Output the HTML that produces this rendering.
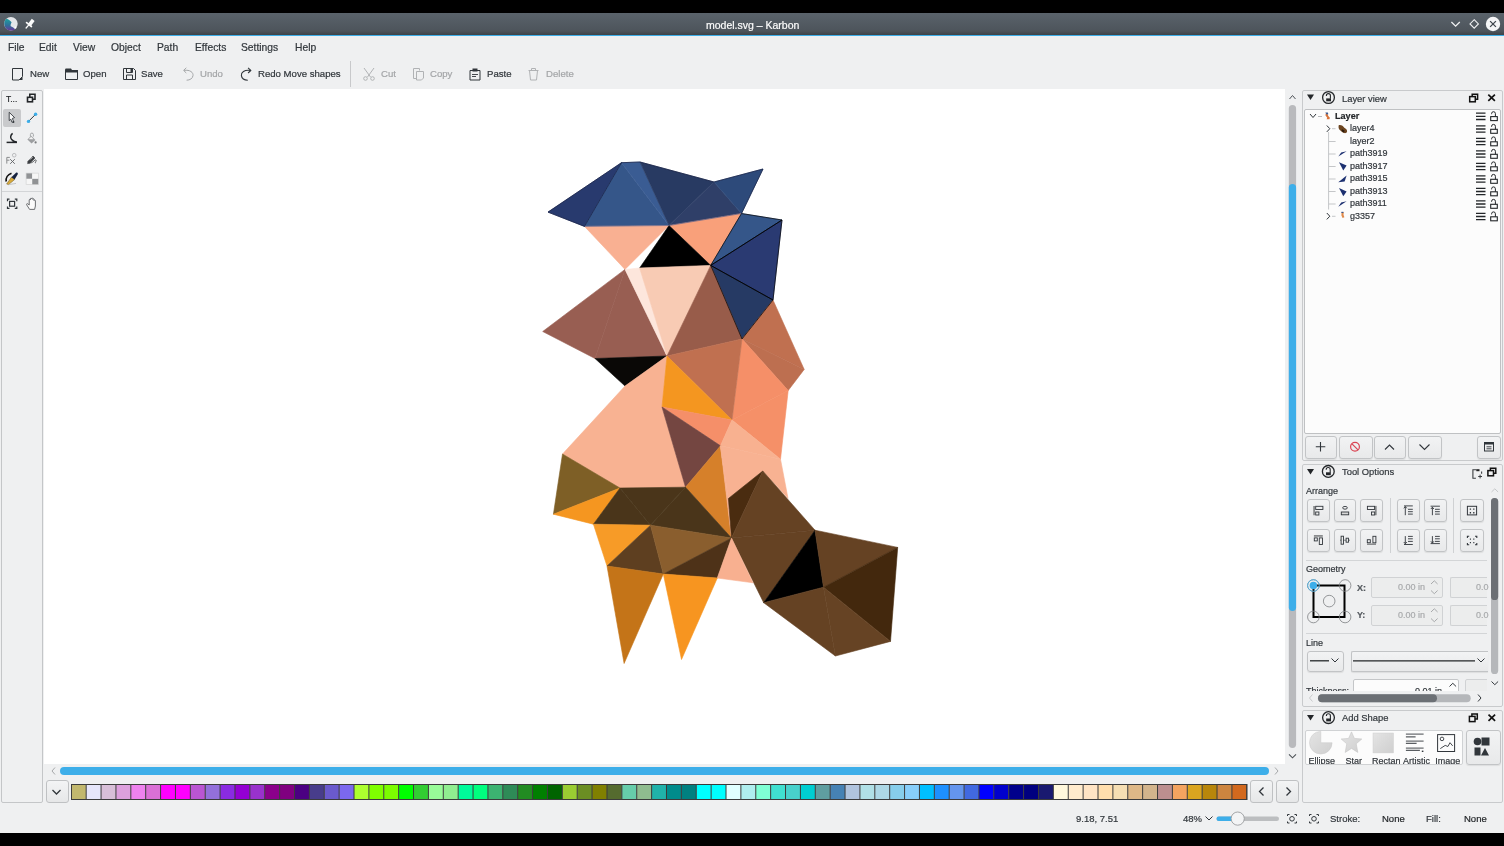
<!DOCTYPE html>
<html><head><meta charset="utf-8">
<style>
*{margin:0;padding:0;box-sizing:border-box}
html,body{width:1504px;height:846px;overflow:hidden;background:#eff0f1;font-family:"Liberation Sans",sans-serif;color:#31363b}
.a{position:absolute}
.t{position:absolute;white-space:nowrap;line-height:1;will-change:transform;-webkit-text-stroke-width:0.2px}
#topbar{left:0;top:0;width:1504px;height:13px;background:#000}
#botbar{left:0;top:833px;width:1504px;height:13px;background:#000}
#title{left:0;top:13px;width:1504px;height:22px;background:linear-gradient(#5a636b,#4d545b 82%,#3e4348)}
#blue{left:0;top:35px;width:1504px;height:1px;background:#3daee9}
.menu{font-size:10.3px;top:43px;color:#31363b}
.tb{font-size:9.6px;top:69px;color:#31363b}
.dis{color:#a3a5a7}
#canvas{left:44px;top:89px;width:1241px;height:675px;background:#fff}
#toolbox{left:1px;top:90px;width:42px;height:713px;border:1px solid #c4c6c8;border-radius:2px;background:#eff0f1}
.dock{position:absolute;left:1302px;width:201px;border:1px solid #c8cacc;border-radius:2px;background:#eff0f1}
.small{font-size:9px}
.btn{position:absolute;border:1px solid #c2c4c6;border-radius:3px;background:linear-gradient(#f2f3f4,#e8e9ea);box-shadow:0 1px 1px rgba(0,0,0,0.08)}
.inp{position:absolute;border:1px solid #d0d2d4;border-radius:2px;background:#eceded}
</style></head><body>
<div class="a" id="topbar"></div>
<div class="a" id="title"></div>
<div class="a" id="blue"></div>
<div class="t" style="left:705.5px;top:20.2px;font-size:10.5px;color:#fcfcfc">model.svg – Karbon</div>

<!-- menu -->
<div class="t menu" style="left:8px">File</div>
<div class="t menu" style="left:39px">Edit</div>
<div class="t menu" style="left:73px">View</div>
<div class="t menu" style="left:111px">Object</div>
<div class="t menu" style="left:157px">Path</div>
<div class="t menu" style="left:195px">Effects</div>
<div class="t menu" style="left:241px">Settings</div>
<div class="t menu" style="left:295px">Help</div>

<!-- toolbar text -->
<div class="t tb" style="left:29.5px">New</div>
<div class="t tb" style="left:83px">Open</div>
<div class="t tb" style="left:141px">Save</div>
<div class="t tb dis" style="left:199.5px">Undo</div>
<div class="t tb" style="left:257.5px">Redo Move shapes</div>
<div class="a" style="left:350px;top:61px;width:1px;height:26px;background:#c8c9cb"></div>
<div class="t tb dis" style="left:380.5px">Cut</div>
<div class="t tb dis" style="left:430px">Copy</div>
<div class="t tb" style="left:486.5px">Paste</div>
<div class="t tb dis" style="left:545.5px">Delete</div>

<div class="a" id="toolbox"></div>
<!-- title bar icons -->
<svg class="a" style="left:0;top:13px" width="40" height="22" viewBox="0 13 40 22">
<defs><linearGradient id="kg" x1="0" y1="0" x2="0" y2="1"><stop offset="0" stop-color="#1fa0a0"/><stop offset="0.55" stop-color="#2f6f9a"/><stop offset="1" stop-color="#6a3a9a"/></linearGradient></defs>
<circle cx="10.9" cy="23.8" r="6.8" fill="#e3e6e9"/>
<path d="M6.5 18.8 C8.5 19.5 10 20.5 11.6 22.2 C10.8 23.8 10.3 25 10.8 26.3 C12.5 27 14 28 15.2 29.2 C13.8 30.3 12.4 30.7 10.9 30.6 A6.8 6.8 0 0 1 6.5 18.8 Z" fill="url(#kg)"/>
<circle cx="15.5" cy="27.6" r="1" fill="#ffffff"/>
<path d="M31.8 18.85 L34.6 20.95 L30.7 26.15 L27.9 24.05 Z" fill="#fbfbfb"/>
<path d="M26.6 22.6 L31.4 26.5" stroke="#fbfbfb" stroke-width="1.7" stroke-linecap="round"/>
<path d="M28.4 25.3 L26.1 28" stroke="#fbfbfb" stroke-width="1.3" stroke-linecap="round"/>
</svg>
<svg class="a" style="left:1440px;top:13px" width="64" height="22" viewBox="1440 13 64 22">
<path d="M1451.4 22 L1455.6 26.2 L1459.8 22" fill="none" stroke="#eff0f1" stroke-width="1.3"/>
<path d="M1474.2 19.7 L1478.4 23.9 L1474.2 28.1 L1470 23.9 Z" fill="none" stroke="#eff0f1" stroke-width="1.1"/>
<circle cx="1493" cy="24" r="7.2" fill="#f4f5f6"/>
<path d="M1490.1 21.1 L1495.9 26.9 M1495.9 21.1 L1490.1 26.9" stroke="#3f464d" stroke-width="1.3"/>
</svg>
<!-- toolbar icons -->
<svg class="a" style="left:0;top:60px" width="560" height="28" viewBox="0 60 560 28">
<g fill="none" stroke="#31363b" stroke-width="1">
<path d="M12.5 68.5 h10 v8 l-3.5 3.5 h-6.5 z"/>
</g>
<path d="M22.5 76.5 v3.5 h-3.5 z" fill="#31363b"/>
<g fill="none" stroke="#31363b" stroke-width="1"><path d="M65.5 69.5 h5 l1 1.5 h6 v8.5 h-12 z"/></g>
<path d="M65.5 68.5 h5.5 l1 1.5 h6 v2.5 h-12.5 z" fill="#31363b"/>
<g fill="none" stroke="#31363b" stroke-width="1"><path d="M123.5 68.5 h10 l2 2 v9 h-12 z M126.5 68.5 v4 h6 v-4 M126.5 79.5 v-4.5 h6 v4.5"/></g>
<path d="M130.5 69 h1.5 v3 h-1.5z" fill="#31363b"/>
<g fill="none" stroke="#a4a6a8" stroke-width="1"><path d="M184 70.4 C190 69.5 193.5 72.5 193 75.6 C192.6 78.5 190 80.2 186.6 80.2"/><path d="M186.3 67.8 L183.6 70.4 L186.3 73"/></g>
<g fill="none" stroke="#31363b" stroke-width="1.1"><path d="M250.4 70.4 C244.4 69.5 240.9 72.5 241.4 75.6 C241.8 78.5 244.4 80.2 247.8 80.2"/><path d="M248.1 67.8 L250.8 70.4 L248.1 73"/></g>
<g fill="none" stroke="#b0b2b4" stroke-width="1"><path d="M364 68 l6.5 9 M374 68 l-6.5 9"/><circle cx="365.5" cy="78.5" r="1.8"/><circle cx="372.5" cy="78.5" r="1.8"/></g>
<g fill="none" stroke="#b0b2b4" stroke-width="1"><path d="M413.5 68.5 h6 v2 M413.5 68.5 v10 h2.5"/><path d="M416.5 71.5 h7 v6.5 l-2 2 h-5 z"/></g>
<g fill="none" stroke="#31363b" stroke-width="1"><path d="M470 70.5 h10 v9.5 h-10 z"/></g>
<path d="M472.5 68.5 h5 v3 h-5z" fill="#31363b"/><path d="M472 74.5 h6 M472 76.5 h4" stroke="#31363b" stroke-width="0.9"/>
<g fill="none" stroke="#b0b2b4" stroke-width="1"><path d="M528.5 70.5 h10 M531.5 70.5 v-2 h4 v2 M529.5 70.5 l1 9.5 h6 l1 -9.5"/></g>
</svg>
<!-- toolbox icons -->
<div class="t" style="left:6px;top:94.5px;font-size:8.5px;color:#232629">T...</div>
<div class="a" style="left:3.2px;top:108.7px;width:17.5px;height:18px;border-radius:2px;background:#c9cacc"></div>
<div class="a" style="left:2px;top:191px;width:40px;height:1px;background:#d3d5d7"></div>
<svg class="a" style="left:0;top:88px" width="44" height="125" viewBox="0 88 44 125">
<g fill="none" stroke="#232629" stroke-width="1.6"><rect x="27.5" y="97.3" width="5" height="4.5"/><path d="M29.8 97.3 v-3 h5.2 v5 h-2.5"/></g>
<path d="M9.2 112.3 L14.6 117.6 L12.4 118.4 L13.6 121.6 L12 122.4 L10.8 119.2 L9.2 120.6 Z" fill="#fafafa" stroke="#31363b" stroke-width="0.9" stroke-linejoin="round"/>
<circle cx="13.5" cy="122" r="0.9" fill="#31363b"/>
<path d="M28.5 121.4 L35.6 114.3" stroke="#31363b" stroke-width="1"/>
<circle cx="28.5" cy="121.4" r="1.7" fill="#3daee9"/><circle cx="35.6" cy="114.3" r="1.7" fill="#3daee9"/>
<path d="M12.6 133.4 C10.5 135 10 137.8 11.6 139.6 C12.8 141 14.5 141.8 16.8 142.3" fill="none" stroke="#232629" stroke-width="1.5"/>
<path d="M6.6 142.4 h10.4" stroke="#232629" stroke-width="1.5"/><path d="M12.5 141.2 L17 141.8 L17 143 L12.5 143 Z" fill="#232629"/>
<path d="M27.4 139.6 L31.2 135.8 L35.4 140 L31.6 143.6 Z" fill="#9c9ea0"/><path d="M28.6 139.2 L31.2 136.8 L33.6 139.2 Z" fill="#f4f4f4"/>
<path d="M30.4 136.6 v-2 a1.5 1.5 0 0 1 3 0 v2" fill="none" stroke="#9c9ea0" stroke-width="0.9"/><circle cx="35.6" cy="142.4" r="1.1" fill="#7a7c7e"/>
<path d="M6.8 157.4 v6.2 M6.8 157.4 h3 M6.8 160.2 h2.6" fill="none" stroke="#8a8c8e" stroke-width="1"/>
<path d="M10.2 159.2 L14.8 163.8 M14.8 159.2 L10.2 163.8" stroke="#5d6063" stroke-width="0.9"/>
<circle cx="14.2" cy="155.2" r="1.8" fill="none" stroke="#b4b6b8" stroke-width="0.9"/>
<path d="M28 161.2 L33 156 L35 158 L30 163.2 L27.6 163.6 Z" fill="#3a3d40" stroke="#3a3d40" stroke-width="0.6" stroke-linejoin="round"/><path d="M30 159.6 L32.6 157" stroke="#f4f4f4" stroke-width="0.8"/>
<path d="M30.2 163 C32.5 162.8 33.8 161 35 160 C36 159.4 36.6 160.4 35.8 161.6 C35.3 162.3 35 162.8 36 163" fill="none" stroke="#3a3d40" stroke-width="0.8"/>
<path d="M6.2 181.5 C5.6 178 7.8 174.5 11.5 173.2" fill="none" stroke="#111" stroke-width="1.7"/>
<path d="M6.6 184 L11.6 177 L14.6 179.6 L8.6 184.6 Z" fill="#d8aa3a" stroke="#6a5520" stroke-width="0.5"/>
<path d="M11.4 177.2 L16 172.8 C17.5 172.2 18.2 173.2 17.6 174.4 L14.6 179.6 Z" fill="#16223e"/>
<path d="M9 184.6 L16 183.4" stroke="#b8babc" stroke-width="0.8"/>
<rect x="26.1" y="173.1" width="6.15" height="5.75" fill="#909294"/><rect x="32.25" y="173.1" width="6.15" height="5.75" fill="#f6f6f6"/>
<rect x="26.1" y="178.85" width="6.15" height="5.75" fill="#f6f6f6"/><rect x="32.25" y="178.85" width="6.15" height="5.75" fill="#909294"/>
<rect x="26.1" y="173.1" width="12.3" height="11.5" fill="none" stroke="#cfcfcf" stroke-width="0.6"/>
<g fill="none" stroke="#31363b" stroke-width="1.2"><path d="M7.5 201.2 v-2 h2 M14.8 199.2 h2 v2 M16.8 206.4 v2 h-2 M9.5 208.4 h-2 v-2"/><rect x="9.6" y="201.4" width="5" height="4.8"/></g>
<path d="M29.6 209.4 L26.8 205 C26.2 204 27 203.2 27.8 203.8 L29.2 205 V200 C29.2 199.2 30.4 199.2 30.4 200 V198.8 C30.4 198 31.6 198 31.6 198.8 V198.6 C31.6 197.8 32.8 197.8 32.8 198.6 V199.4 C32.8 198.6 34 198.6 34 199.4 V200.6 C34 199.8 35.4 199.8 35.4 200.8 V206 L34.6 209.4 Z" fill="#fbfbfb" stroke="#5d6063" stroke-width="0.9" stroke-linejoin="round"/>
</svg>
<div class="a" id="canvas"></div>
<svg class="a" style="left:0;top:0" width="1504" height="846" viewBox="0 0 1504 846"><g stroke-width="0.6" stroke-linejoin="round"><polygon points="548,212.1 621.5,162.7 584.5,226.4" fill="#283a6e" stroke="#283a6e"/><polygon points="621.5,162.7 584.5,226.4 669,225.5" fill="#355689" stroke="#355689"/><polygon points="621.5,162.7 640,162 669,225.5" fill="#3a5c93" stroke="#3a5c93"/><polygon points="640,162 669,225.5 714,182" fill="#283a62" stroke="#283a62"/><polygon points="669,225.5 714,182 741.5,213.5" fill="#2f3f68" stroke="#2f3f68"/><polygon points="714,182 763,169 741.5,213.5" fill="#2d4a7a" stroke="#2d4a7a"/><polygon points="669,225.5 741.5,213.5 710.7,265.4" fill="#f9a07a" stroke="#f9a07a"/><polygon points="584.5,226.4 669,225.5 625,269.4" fill="#f9b092" stroke="#f9b092"/><polygon points="669,225.5 639.6,268 710.7,265.4" fill="#000000" stroke="#000000"/><polygon points="741.5,213.5 782,220 710.7,265.4" fill="#355689" stroke="#355689"/><polygon points="782,220 773,300 710.7,265.4" fill="#2a3a72" stroke="#2a3a72"/><polygon points="710.7,265.4 773,300 742,339" fill="#263a64" stroke="#263a64"/><polygon points="625,269.4 542.7,331.5 595,358.5" fill="#985e52" stroke="#985e52"/><polygon points="625,269.4 595,358.5 667,356" fill="#985e52" stroke="#985e52"/><polygon points="625,269.4 639.6,268 667,356" fill="#fde6dc" stroke="#fde6dc"/><polygon points="639.6,268 710.7,265.4 667,356" fill="#f8cbb4" stroke="#f8cbb4"/><polygon points="710.7,265.4 742,339 667,356" fill="#985c4a" stroke="#985c4a"/><polygon points="773,300 742,339 804.2,369.4" fill="#c07050" stroke="#c07050"/><polygon points="742,339 804.2,369.4 788.2,390.5" fill="#bd6f50" stroke="#bd6f50"/><polygon points="742,339 788.2,390.5 732,420" fill="#f58f68" stroke="#f58f68"/><polygon points="667,356 742,339 732,420" fill="#c07050" stroke="#c07050"/><polygon points="595,358.5 667,356 625,386" fill="#0a0806" stroke="#0a0806"/><polygon points="625,386 667,356 662,407 685.5,487.2 620,488 562.5,454" fill="#f8b292" stroke="#f8b292"/><polygon points="667,356 662,407 732,420" fill="#f49620" stroke="#f49620"/><polygon points="662,407 732,420 720.5,445.8" fill="#f58f69" stroke="#f58f69"/><polygon points="732,420 788.2,390.5 780.5,459.2" fill="#f59068" stroke="#f59068"/><polygon points="732,420 720.5,445.8 780.5,459.2" fill="#f8b190" stroke="#f8b190"/><polygon points="662,407 720.5,445.8 685.5,487.2" fill="#744641" stroke="#744641"/><polygon points="720.5,445.8 685.5,487.2 731.5,538" fill="#d6802a" stroke="#d6802a"/><polygon points="720.5,445.8 780.5,459.2 788,498.3 762.8,471 728.4,498.5" fill="#f8b292" stroke="#f8b292"/><polygon points="720.5,445.8 728.4,498.5 731.5,538" fill="#f8b292" stroke="#f8b292"/><polygon points="562.5,454 553.4,514.2 620,488" fill="#7e5f26" stroke="#7e5f26"/><polygon points="553.4,514.2 620,488 593.4,524.2" fill="#f59620" stroke="#f59620"/><polygon points="620,488 685.5,487.2 650.5,525.2" fill="#4a351a" stroke="#4a351a"/><polygon points="620,488 593.4,524.2 650.5,525.2" fill="#4a351a" stroke="#4a351a"/><polygon points="685.5,487.2 650.5,525.2 731.5,538" fill="#4a351a" stroke="#4a351a"/><polygon points="762.8,471 728.4,498.5 731.5,538" fill="#4a2c10" stroke="#4a2c10"/><polygon points="762.8,471 731.5,538 815,530.2" fill="#654223" stroke="#654223"/><polygon points="731.5,538 815,530.2 763.7,602.7" fill="#654223" stroke="#654223"/><polygon points="593.4,524.2 650.5,525.2 607,566" fill="#f79b27" stroke="#f79b27"/><polygon points="650.5,525.2 607,566 663.3,574" fill="#5e3f20" stroke="#5e3f20"/><polygon points="650.5,525.2 731.5,538 663.3,574" fill="#8a5e2e" stroke="#8a5e2e"/><polygon points="731.5,538 663.3,574 717.3,578" fill="#4e3218" stroke="#4e3218"/><polygon points="731.5,538 717.3,578 753,582.8" fill="#f8b090" stroke="#f8b090"/><polygon points="607,566 663.3,574 624.1,663.5" fill="#c47418" stroke="#c47418"/><polygon points="663.3,574 717.3,578 681.5,659.5" fill="#f79520" stroke="#f79520"/><polygon points="815,530.2 763.7,602.7 823.5,587.2" fill="#000000" stroke="#000000"/><polygon points="815,530.2 823.5,587.2 897.7,547.4" fill="#654223" stroke="#654223"/><polygon points="823.5,587.2 897.7,547.4 890.5,641.4" fill="#43280d" stroke="#43280d"/><polygon points="763.7,602.7 823.5,587.2 835.4,656" fill="#654223" stroke="#654223"/><polygon points="823.5,587.2 890.5,641.4 835.4,656" fill="#664324" stroke="#664324"/></g><g fill="none" stroke="#000" stroke-width="0.7" stroke-linejoin="round"><polygon points="741.5,213.5 782,220 710.7,265.4"/><polygon points="782,220 773,300 710.7,265.4"/><polygon points="710.7,265.4 773,300 742,339"/></g><g fill="none" stroke="#141c40" stroke-width="0.7" stroke-linejoin="round" stroke-linecap="round"><polyline points="584.5,226.4 548,212.1 621.5,162.7 640,162 714,182 763,169 741.5,213.5"/><polyline points="621.5,162.7 584.5,226.4"/></g><g fill="none" stroke="#24468a" stroke-width="0.6" stroke-opacity="0.8"><polyline points="584.5,226.4 669,225.5 741.5,213.5"/></g></svg>

<!-- scrollbars -->
<svg class="a" style="left:1286px;top:89px" width="14" height="676" viewBox="1286 89 14 676">
<path d="M1289.5 99 L1292.5 95.5 L1295.5 99" fill="none" stroke="#4d5257" stroke-width="1"/>
<rect x="1288.8" y="105" width="7.3" height="643" rx="3.65" fill="#b9babd"/>
<rect x="1288.8" y="184" width="7.3" height="427" rx="3.65" fill="#3daee9"/>
<path d="M1289 754.3 L1292.5 757.8 L1296 754.3" fill="none" stroke="#4d5257" stroke-width="1.1"/>
</svg>
<svg class="a" style="left:44px;top:764px" width="1242" height="16" viewBox="44 764 1242 16">
<path d="M55 767.5 L52 771 L55 774.5" fill="none" stroke="#a6a8aa" stroke-width="1"/>
<rect x="60" y="767" width="1209" height="8" rx="4" fill="#3daee9"/>
<path d="M1275 767.5 L1278 771 L1275 774.5" fill="none" stroke="#a6a8aa" stroke-width="1"/>
</svg>

<!-- palette -->
<div class="a" style="left:45.5px;top:780px;width:23px;height:23px;border:1px solid #bfc1c3;border-radius:3px;background:linear-gradient(#f3f4f5,#e6e7e8)"></div>
<svg class="a" style="left:45px;top:780px" width="24" height="24"><path d="M7.5 10 L11.5 14 L15.5 10" fill="none" stroke="#31363b" stroke-width="1.3"/></svg>
<svg class="a" style="left:71px;top:784px" width="1177" height="16" viewBox="71 784 1177 16"><rect x="71.30" y="784.5" width="14.88" height="15" fill="#c2b86e"/><rect x="86.18" y="784.5" width="14.88" height="15" fill="#e6e6fa"/><rect x="101.06" y="784.5" width="14.88" height="15" fill="#d8bfd8"/><rect x="115.94" y="784.5" width="14.88" height="15" fill="#dda0dd"/><rect x="130.82" y="784.5" width="14.88" height="15" fill="#ee82ee"/><rect x="145.70" y="784.5" width="14.88" height="15" fill="#da70d6"/><rect x="160.58" y="784.5" width="14.88" height="15" fill="#ff00ff"/><rect x="175.46" y="784.5" width="14.88" height="15" fill="#ff00ff"/><rect x="190.34" y="784.5" width="14.88" height="15" fill="#ba55d3"/><rect x="205.22" y="784.5" width="14.88" height="15" fill="#9370db"/><rect x="220.10" y="784.5" width="14.88" height="15" fill="#8a2be2"/><rect x="234.98" y="784.5" width="14.88" height="15" fill="#9400d3"/><rect x="249.86" y="784.5" width="14.88" height="15" fill="#9932cc"/><rect x="264.74" y="784.5" width="14.88" height="15" fill="#8b008b"/><rect x="279.62" y="784.5" width="14.88" height="15" fill="#800080"/><rect x="294.50" y="784.5" width="14.88" height="15" fill="#4b0082"/><rect x="309.38" y="784.5" width="14.88" height="15" fill="#483d8b"/><rect x="324.26" y="784.5" width="14.88" height="15" fill="#6a5acd"/><rect x="339.14" y="784.5" width="14.88" height="15" fill="#7b68ee"/><rect x="354.02" y="784.5" width="14.88" height="15" fill="#adff2f"/><rect x="368.89" y="784.5" width="14.88" height="15" fill="#7fff00"/><rect x="383.77" y="784.5" width="14.88" height="15" fill="#7cfc00"/><rect x="398.65" y="784.5" width="14.88" height="15" fill="#00ff00"/><rect x="413.53" y="784.5" width="14.88" height="15" fill="#32cd32"/><rect x="428.41" y="784.5" width="14.88" height="15" fill="#98fb98"/><rect x="443.29" y="784.5" width="14.88" height="15" fill="#90ee90"/><rect x="458.17" y="784.5" width="14.88" height="15" fill="#00fa9a"/><rect x="473.05" y="784.5" width="14.88" height="15" fill="#00ff7f"/><rect x="487.93" y="784.5" width="14.88" height="15" fill="#3cb371"/><rect x="502.81" y="784.5" width="14.88" height="15" fill="#2e8b57"/><rect x="517.69" y="784.5" width="14.88" height="15" fill="#228b22"/><rect x="532.57" y="784.5" width="14.88" height="15" fill="#008000"/><rect x="547.45" y="784.5" width="14.88" height="15" fill="#006400"/><rect x="562.33" y="784.5" width="14.88" height="15" fill="#9acd32"/><rect x="577.21" y="784.5" width="14.88" height="15" fill="#6b8e23"/><rect x="592.09" y="784.5" width="14.88" height="15" fill="#808000"/><rect x="606.97" y="784.5" width="14.88" height="15" fill="#556b2f"/><rect x="621.85" y="784.5" width="14.88" height="15" fill="#66cdaa"/><rect x="636.73" y="784.5" width="14.88" height="15" fill="#8fbc8f"/><rect x="651.61" y="784.5" width="14.88" height="15" fill="#20b2aa"/><rect x="666.49" y="784.5" width="14.88" height="15" fill="#008b8b"/><rect x="681.37" y="784.5" width="14.88" height="15" fill="#008080"/><rect x="696.25" y="784.5" width="14.88" height="15" fill="#00ffff"/><rect x="711.13" y="784.5" width="14.88" height="15" fill="#00ffff"/><rect x="726.01" y="784.5" width="14.88" height="15" fill="#e0ffff"/><rect x="740.89" y="784.5" width="14.88" height="15" fill="#afeeee"/><rect x="755.77" y="784.5" width="14.88" height="15" fill="#7fffd4"/><rect x="770.65" y="784.5" width="14.88" height="15" fill="#40e0d0"/><rect x="785.53" y="784.5" width="14.88" height="15" fill="#48d1cc"/><rect x="800.41" y="784.5" width="14.88" height="15" fill="#00ced1"/><rect x="815.29" y="784.5" width="14.88" height="15" fill="#5f9ea0"/><rect x="830.17" y="784.5" width="14.88" height="15" fill="#4682b4"/><rect x="845.05" y="784.5" width="14.88" height="15" fill="#b0c4de"/><rect x="859.93" y="784.5" width="14.88" height="15" fill="#b0e0e6"/><rect x="874.81" y="784.5" width="14.88" height="15" fill="#add8e6"/><rect x="889.69" y="784.5" width="14.88" height="15" fill="#87ceeb"/><rect x="904.57" y="784.5" width="14.88" height="15" fill="#87cefa"/><rect x="919.45" y="784.5" width="14.88" height="15" fill="#00bfff"/><rect x="934.33" y="784.5" width="14.88" height="15" fill="#1e90ff"/><rect x="949.21" y="784.5" width="14.88" height="15" fill="#6495ed"/><rect x="964.08" y="784.5" width="14.88" height="15" fill="#4169e1"/><rect x="978.96" y="784.5" width="14.88" height="15" fill="#0000ff"/><rect x="993.84" y="784.5" width="14.88" height="15" fill="#0000cd"/><rect x="1008.72" y="784.5" width="14.88" height="15" fill="#00008b"/><rect x="1023.60" y="784.5" width="14.88" height="15" fill="#000080"/><rect x="1038.48" y="784.5" width="14.88" height="15" fill="#191970"/><rect x="1053.36" y="784.5" width="14.88" height="15" fill="#fff8dc"/><rect x="1068.24" y="784.5" width="14.88" height="15" fill="#ffebcd"/><rect x="1083.12" y="784.5" width="14.88" height="15" fill="#ffe4c4"/><rect x="1098.00" y="784.5" width="14.88" height="15" fill="#ffdead"/><rect x="1112.88" y="784.5" width="14.88" height="15" fill="#f5deb3"/><rect x="1127.76" y="784.5" width="14.88" height="15" fill="#deb887"/><rect x="1142.64" y="784.5" width="14.88" height="15" fill="#d2b48c"/><rect x="1157.52" y="784.5" width="14.88" height="15" fill="#bc8f8f"/><rect x="1172.40" y="784.5" width="14.88" height="15" fill="#f4a460"/><rect x="1187.28" y="784.5" width="14.88" height="15" fill="#daa520"/><rect x="1202.16" y="784.5" width="14.88" height="15" fill="#b8860b"/><rect x="1217.04" y="784.5" width="14.88" height="15" fill="#cd853f"/><rect x="1231.92" y="784.5" width="14.88" height="15" fill="#d2691e"/><line x1="71.30" y1="784" x2="71.30" y2="800" stroke="#3b3b3b" stroke-width="1"/><line x1="86.18" y1="784" x2="86.18" y2="800" stroke="#3b3b3b" stroke-width="1"/><line x1="101.06" y1="784" x2="101.06" y2="800" stroke="#3b3b3b" stroke-width="1"/><line x1="115.94" y1="784" x2="115.94" y2="800" stroke="#3b3b3b" stroke-width="1"/><line x1="130.82" y1="784" x2="130.82" y2="800" stroke="#3b3b3b" stroke-width="1"/><line x1="145.70" y1="784" x2="145.70" y2="800" stroke="#3b3b3b" stroke-width="1"/><line x1="160.58" y1="784" x2="160.58" y2="800" stroke="#3b3b3b" stroke-width="1"/><line x1="175.46" y1="784" x2="175.46" y2="800" stroke="#3b3b3b" stroke-width="1"/><line x1="190.34" y1="784" x2="190.34" y2="800" stroke="#3b3b3b" stroke-width="1"/><line x1="205.22" y1="784" x2="205.22" y2="800" stroke="#3b3b3b" stroke-width="1"/><line x1="220.10" y1="784" x2="220.10" y2="800" stroke="#3b3b3b" stroke-width="1"/><line x1="234.98" y1="784" x2="234.98" y2="800" stroke="#3b3b3b" stroke-width="1"/><line x1="249.86" y1="784" x2="249.86" y2="800" stroke="#3b3b3b" stroke-width="1"/><line x1="264.74" y1="784" x2="264.74" y2="800" stroke="#3b3b3b" stroke-width="1"/><line x1="279.62" y1="784" x2="279.62" y2="800" stroke="#3b3b3b" stroke-width="1"/><line x1="294.50" y1="784" x2="294.50" y2="800" stroke="#3b3b3b" stroke-width="1"/><line x1="309.38" y1="784" x2="309.38" y2="800" stroke="#3b3b3b" stroke-width="1"/><line x1="324.26" y1="784" x2="324.26" y2="800" stroke="#3b3b3b" stroke-width="1"/><line x1="339.14" y1="784" x2="339.14" y2="800" stroke="#3b3b3b" stroke-width="1"/><line x1="354.02" y1="784" x2="354.02" y2="800" stroke="#3b3b3b" stroke-width="1"/><line x1="368.89" y1="784" x2="368.89" y2="800" stroke="#3b3b3b" stroke-width="1"/><line x1="383.77" y1="784" x2="383.77" y2="800" stroke="#3b3b3b" stroke-width="1"/><line x1="398.65" y1="784" x2="398.65" y2="800" stroke="#3b3b3b" stroke-width="1"/><line x1="413.53" y1="784" x2="413.53" y2="800" stroke="#3b3b3b" stroke-width="1"/><line x1="428.41" y1="784" x2="428.41" y2="800" stroke="#3b3b3b" stroke-width="1"/><line x1="443.29" y1="784" x2="443.29" y2="800" stroke="#3b3b3b" stroke-width="1"/><line x1="458.17" y1="784" x2="458.17" y2="800" stroke="#3b3b3b" stroke-width="1"/><line x1="473.05" y1="784" x2="473.05" y2="800" stroke="#3b3b3b" stroke-width="1"/><line x1="487.93" y1="784" x2="487.93" y2="800" stroke="#3b3b3b" stroke-width="1"/><line x1="502.81" y1="784" x2="502.81" y2="800" stroke="#3b3b3b" stroke-width="1"/><line x1="517.69" y1="784" x2="517.69" y2="800" stroke="#3b3b3b" stroke-width="1"/><line x1="532.57" y1="784" x2="532.57" y2="800" stroke="#3b3b3b" stroke-width="1"/><line x1="547.45" y1="784" x2="547.45" y2="800" stroke="#3b3b3b" stroke-width="1"/><line x1="562.33" y1="784" x2="562.33" y2="800" stroke="#3b3b3b" stroke-width="1"/><line x1="577.21" y1="784" x2="577.21" y2="800" stroke="#3b3b3b" stroke-width="1"/><line x1="592.09" y1="784" x2="592.09" y2="800" stroke="#3b3b3b" stroke-width="1"/><line x1="606.97" y1="784" x2="606.97" y2="800" stroke="#3b3b3b" stroke-width="1"/><line x1="621.85" y1="784" x2="621.85" y2="800" stroke="#3b3b3b" stroke-width="1"/><line x1="636.73" y1="784" x2="636.73" y2="800" stroke="#3b3b3b" stroke-width="1"/><line x1="651.61" y1="784" x2="651.61" y2="800" stroke="#3b3b3b" stroke-width="1"/><line x1="666.49" y1="784" x2="666.49" y2="800" stroke="#3b3b3b" stroke-width="1"/><line x1="681.37" y1="784" x2="681.37" y2="800" stroke="#3b3b3b" stroke-width="1"/><line x1="696.25" y1="784" x2="696.25" y2="800" stroke="#3b3b3b" stroke-width="1"/><line x1="711.13" y1="784" x2="711.13" y2="800" stroke="#3b3b3b" stroke-width="1"/><line x1="726.01" y1="784" x2="726.01" y2="800" stroke="#3b3b3b" stroke-width="1"/><line x1="740.89" y1="784" x2="740.89" y2="800" stroke="#3b3b3b" stroke-width="1"/><line x1="755.77" y1="784" x2="755.77" y2="800" stroke="#3b3b3b" stroke-width="1"/><line x1="770.65" y1="784" x2="770.65" y2="800" stroke="#3b3b3b" stroke-width="1"/><line x1="785.53" y1="784" x2="785.53" y2="800" stroke="#3b3b3b" stroke-width="1"/><line x1="800.41" y1="784" x2="800.41" y2="800" stroke="#3b3b3b" stroke-width="1"/><line x1="815.29" y1="784" x2="815.29" y2="800" stroke="#3b3b3b" stroke-width="1"/><line x1="830.17" y1="784" x2="830.17" y2="800" stroke="#3b3b3b" stroke-width="1"/><line x1="845.05" y1="784" x2="845.05" y2="800" stroke="#3b3b3b" stroke-width="1"/><line x1="859.93" y1="784" x2="859.93" y2="800" stroke="#3b3b3b" stroke-width="1"/><line x1="874.81" y1="784" x2="874.81" y2="800" stroke="#3b3b3b" stroke-width="1"/><line x1="889.69" y1="784" x2="889.69" y2="800" stroke="#3b3b3b" stroke-width="1"/><line x1="904.57" y1="784" x2="904.57" y2="800" stroke="#3b3b3b" stroke-width="1"/><line x1="919.45" y1="784" x2="919.45" y2="800" stroke="#3b3b3b" stroke-width="1"/><line x1="934.33" y1="784" x2="934.33" y2="800" stroke="#3b3b3b" stroke-width="1"/><line x1="949.21" y1="784" x2="949.21" y2="800" stroke="#3b3b3b" stroke-width="1"/><line x1="964.08" y1="784" x2="964.08" y2="800" stroke="#3b3b3b" stroke-width="1"/><line x1="978.96" y1="784" x2="978.96" y2="800" stroke="#3b3b3b" stroke-width="1"/><line x1="993.84" y1="784" x2="993.84" y2="800" stroke="#3b3b3b" stroke-width="1"/><line x1="1008.72" y1="784" x2="1008.72" y2="800" stroke="#3b3b3b" stroke-width="1"/><line x1="1023.60" y1="784" x2="1023.60" y2="800" stroke="#3b3b3b" stroke-width="1"/><line x1="1038.48" y1="784" x2="1038.48" y2="800" stroke="#3b3b3b" stroke-width="1"/><line x1="1053.36" y1="784" x2="1053.36" y2="800" stroke="#3b3b3b" stroke-width="1"/><line x1="1068.24" y1="784" x2="1068.24" y2="800" stroke="#3b3b3b" stroke-width="1"/><line x1="1083.12" y1="784" x2="1083.12" y2="800" stroke="#3b3b3b" stroke-width="1"/><line x1="1098.00" y1="784" x2="1098.00" y2="800" stroke="#3b3b3b" stroke-width="1"/><line x1="1112.88" y1="784" x2="1112.88" y2="800" stroke="#3b3b3b" stroke-width="1"/><line x1="1127.76" y1="784" x2="1127.76" y2="800" stroke="#3b3b3b" stroke-width="1"/><line x1="1142.64" y1="784" x2="1142.64" y2="800" stroke="#3b3b3b" stroke-width="1"/><line x1="1157.52" y1="784" x2="1157.52" y2="800" stroke="#3b3b3b" stroke-width="1"/><line x1="1172.40" y1="784" x2="1172.40" y2="800" stroke="#3b3b3b" stroke-width="1"/><line x1="1187.28" y1="784" x2="1187.28" y2="800" stroke="#3b3b3b" stroke-width="1"/><line x1="1202.16" y1="784" x2="1202.16" y2="800" stroke="#3b3b3b" stroke-width="1"/><line x1="1217.04" y1="784" x2="1217.04" y2="800" stroke="#3b3b3b" stroke-width="1"/><line x1="1231.92" y1="784" x2="1231.92" y2="800" stroke="#3b3b3b" stroke-width="1"/><line x1="1246.80" y1="784" x2="1246.80" y2="800" stroke="#3b3b3b" stroke-width="1"/><rect x="71.3" y="784.5" width="1175.50" height="15" fill="none" stroke="#3b3b3b" stroke-width="1"/></svg>
<div class="a" style="left:1250px;top:780px;width:23px;height:23px;border:1px solid #bfc1c3;border-radius:3px;background:linear-gradient(#f3f4f5,#e6e7e8)"></div>
<div class="a" style="left:1276px;top:780px;width:23px;height:23px;border:1px solid #bfc1c3;border-radius:3px;background:linear-gradient(#f3f4f5,#e6e7e8)"></div>
<svg class="a" style="left:1250px;top:780px" width="50" height="24"><path d="M13.5 7.5 L9.5 11.5 L13.5 15.5" fill="none" stroke="#31363b" stroke-width="1.3"/><path d="M36.5 7.5 L40.5 11.5 L36.5 15.5" fill="none" stroke="#31363b" stroke-width="1.3"/></svg>

<!-- Layer docker -->
<div class="dock" style="top:90px;height:371px"></div>
<svg class="a" style="left:1302px;top:90px" width="202" height="20" viewBox="1302 90 202 20">
<path d="M1307 94.5 H1314 L1310.5 100 Z" fill="#232629"/>
<circle cx="1328.5" cy="97.5" r="5.9" fill="none" stroke="#232629" stroke-width="1.3"/><rect x="1326.2" y="98.4" width="4.8" height="2.9" fill="#232629"/><path d="M1326.4 95.9 v-0.3 a2 2 0 0 1 4 0 v3.2" fill="none" stroke="#232629" stroke-width="1.1"/>
<g fill="none" stroke="#111" stroke-width="1.5"><rect x="1469.7" y="96.6" width="5.6" height="5.2"/><path d="M1472.2 96.6 v-2.4 h5.4 v5 h-2.2"/></g>
<path d="M1488.3 94.6 L1494.9 100.8 M1494.9 94.6 L1488.3 100.8" stroke="#111" stroke-width="1.7"/>
</svg>
<div class="t" style="left:1341.5px;top:93.5px;font-size:9.4px">Layer view</div>
<div class="a" style="left:1304px;top:109px;width:197px;height:325px;border:1px solid #bfc1c3;border-radius:2px;background:#fcfcfc"></div>
<svg class="a" style="left:1305px;top:110px" width="196" height="120" viewBox="1305 110 196 120">
<path d="M1310 114 L1313 117.5 L1316 114" fill="none" stroke="#31363b" stroke-width="1"/>
<path d="M1318 116.5 h4" stroke="#b8babc" stroke-width="1"/>
<path d="M1326.8 125.5 L1329.8 128.7 L1326.8 131.9" fill="none" stroke="#31363b" stroke-width="1"/>
<path d="M1328.6 132 V209.5 M1332 128.7 h3.5 M1328.6 141.5 h7 M1328.6 154 h7 M1328.6 166.5 h7 M1328.6 179 h7 M1328.6 191.5 h7 M1328.6 204 h7 M1332 216.3 h3.5" stroke="#c4c6c8" stroke-width="1"/>
<path d="M1326.8 213 L1329.8 216.2 L1326.8 219.4" fill="none" stroke="#31363b" stroke-width="1"/>
<!-- icons -->
<path d="M1326 113 l1.5 0.8 l0.8 2.2 l1.6 1.8 l-0.5 1.4 h-2.8 l0.6 -1.5 l-1.8 -2.5 z" fill="#d9743a"/><path d="M1325.3 112.6 l2.6 -0.2 l0.4 1.8 l-1.6 0.3 z" fill="#3a5a92"/>
<path d="M1338.8 125 c2.5 -0.5 4.5 1 5.5 2.8 c1.5 0.8 3 2 2.8 3.8 c-0.3 1.5 -1.8 1.8 -3.2 1.4 c-1.5 -0.5 -2.2 -1.8 -3.5 -2.6 c-1.2 -0.8 -2.5 -2.5 -1.6 -5.4z" fill="#6b4420"/><path d="M1342 129.2 l2.8 1.6 l-1.2 1.6 l-2 -1.4z" fill="#2a1a0c"/>
<path d="M1338.3 156.6 L1346.6 151.2 L1341.2 152.4 Z" fill="#1c3070"/>
<path d="M1339 162.2 L1346.6 165.6 L1343.3 170.4 Z" fill="#1c3070"/>
<path d="M1338.3 182.3 L1346.6 175.5 L1344.6 181.6 Z" fill="#1c3070"/>
<path d="M1339 188 L1346.6 191.5 L1343.3 196.2 Z" fill="#1c3070"/>
<path d="M1338.3 206.8 L1346.6 201.3 L1341.2 202.6 Z" fill="#1c3070"/>
<path d="M1341.6 212 l2.2 0.3 l-0.3 2.5 l0.9 2.5 l-1.8 0.7 l-1.2 -2.6z" fill="#e08a4a"/><path d="M1341.4 211.8 l2 0 l0 1.2 l-2 0z" fill="#3a5a92"/>
<!-- visibility/lock -->
<g id="vl" stroke="#232629" fill="none">
</g>
</svg>
<svg class="a" style="left:1470px;top:108px" width="34" height="116" viewBox="1470 108 34 116"><g fill="none" stroke="#232629"><path d="M1476 113.1 h9.5 M1476 116.3 h9.5 M1476 119.5 h9.5" stroke-width="1.3"/><rect x="1490.7" y="116.6" width="6.6" height="4" stroke-width="1.1"/><path d="M1495.4 116.6 v-3 a1.9 1.9 0 0 0 -3.8 0 v0.6" stroke-width="1"/><path d="M1476 125.8 h9.5 M1476 129.0 h9.5 M1476 132.2 h9.5" stroke-width="1.3"/><rect x="1490.7" y="129.3" width="6.6" height="4" stroke-width="1.1"/><path d="M1495.4 129.3 v-3 a1.9 1.9 0 0 0 -3.8 0 v0.6" stroke-width="1"/><path d="M1476 138.3 h9.5 M1476 141.5 h9.5 M1476 144.7 h9.5" stroke-width="1.3"/><rect x="1490.7" y="141.8" width="6.6" height="4" stroke-width="1.1"/><path d="M1495.4 141.8 v-3 a1.9 1.9 0 0 0 -3.8 0 v0.6" stroke-width="1"/><path d="M1476 150.8 h9.5 M1476 154.0 h9.5 M1476 157.2 h9.5" stroke-width="1.3"/><rect x="1490.7" y="154.3" width="6.6" height="4" stroke-width="1.1"/><path d="M1495.4 154.3 v-3 a1.9 1.9 0 0 0 -3.8 0 v0.6" stroke-width="1"/><path d="M1476 163.3 h9.5 M1476 166.5 h9.5 M1476 169.7 h9.5" stroke-width="1.3"/><rect x="1490.7" y="166.8" width="6.6" height="4" stroke-width="1.1"/><path d="M1495.4 166.8 v-3 a1.9 1.9 0 0 0 -3.8 0 v0.6" stroke-width="1"/><path d="M1476 175.8 h9.5 M1476 179.0 h9.5 M1476 182.2 h9.5" stroke-width="1.3"/><rect x="1490.7" y="179.3" width="6.6" height="4" stroke-width="1.1"/><path d="M1495.4 179.3 v-3 a1.9 1.9 0 0 0 -3.8 0 v0.6" stroke-width="1"/><path d="M1476 188.3 h9.5 M1476 191.5 h9.5 M1476 194.7 h9.5" stroke-width="1.3"/><rect x="1490.7" y="191.8" width="6.6" height="4" stroke-width="1.1"/><path d="M1495.4 191.8 v-3 a1.9 1.9 0 0 0 -3.8 0 v0.6" stroke-width="1"/><path d="M1476 200.8 h9.5 M1476 204.0 h9.5 M1476 207.2 h9.5" stroke-width="1.3"/><rect x="1490.7" y="204.3" width="6.6" height="4" stroke-width="1.1"/><path d="M1495.4 204.3 v-3 a1.9 1.9 0 0 0 -3.8 0 v0.6" stroke-width="1"/><path d="M1476 213.3 h9.5 M1476 216.5 h9.5 M1476 219.7 h9.5" stroke-width="1.3"/><rect x="1490.7" y="216.8" width="6.6" height="4" stroke-width="1.1"/><path d="M1495.4 216.8 v-3 a1.9 1.9 0 0 0 -3.8 0 v0.6" stroke-width="1"/></g></svg>
<div class="t" style="left:1334.5px;top:111.5px;font-size:9.1px;font-weight:bold;color:#232629">Layer</div>
<div class="t small" style="left:1350px;top:124px">layer4</div>
<div class="t small" style="left:1350px;top:136.5px">layer2</div>
<div class="t small" style="left:1350px;top:149px">path3919</div>
<div class="t small" style="left:1350px;top:161.5px">path3917</div>
<div class="t small" style="left:1350px;top:174px">path3915</div>
<div class="t small" style="left:1350px;top:186.5px">path3913</div>
<div class="t small" style="left:1350px;top:199px">path3911</div>
<div class="t small" style="left:1350px;top:211.5px">g3357</div>
<!-- layer buttons -->
<div class="a btn" style="left:1304.5px;top:435.5px;width:32.5px;height:23.5px"></div>
<div class="a btn" style="left:1339px;top:435.5px;width:33.5px;height:23.5px"></div>
<div class="a btn" style="left:1374px;top:435.5px;width:32px;height:23.5px"></div>
<div class="a btn" style="left:1408px;top:435.5px;width:33.5px;height:23.5px"></div>
<div class="a btn" style="left:1477px;top:435.5px;width:23.5px;height:23.5px"></div>
<svg class="a" style="left:1302px;top:435px" width="202" height="25" viewBox="1302 435 202 25">
<path d="M1320.5 442 v9.5 M1315.8 446.8 h9.5" stroke="#31363b" stroke-width="1.1"/>
<circle cx="1355" cy="446.8" r="4.4" fill="none" stroke="#da4453" stroke-width="1.2"/><path d="M1352 443.8 L1358 449.8" stroke="#da4453" stroke-width="1.2"/>
<path d="M1385 449.5 L1389.5 445 L1394 449.5" fill="none" stroke="#31363b" stroke-width="1.1"/>
<path d="M1419.5 444.5 L1424.5 449.5 L1429.5 444.5" fill="none" stroke="#31363b" stroke-width="1.1"/>
<rect x="1484.5" y="442.5" width="9" height="8.5" fill="none" stroke="#31363b" stroke-width="1"/><rect x="1484.5" y="442.5" width="9" height="2" fill="#31363b"/><path d="M1486.5 446.8 h5 M1486.5 448.8 h5" stroke="#31363b" stroke-width="0.9"/>
</svg>

<!-- Tool options docker -->
<div class="dock" style="top:464px;height:243px"></div>
<svg class="a" style="left:1302px;top:464px" width="202" height="20" viewBox="1302 464 202 20">
<path d="M1307 469 H1314 L1310.5 474.5 Z" fill="#232629"/>
<circle cx="1328.3" cy="471.4" r="5.9" fill="none" stroke="#232629" stroke-width="1.3"/><rect x="1326.0" y="472.3" width="4.8" height="2.9" fill="#232629"/><path d="M1326.2 469.8 v-0.3 a2 2 0 0 1 4 0 v3.2" fill="none" stroke="#232629" stroke-width="1.1"/>
<g fill="none" stroke="#3a3d40" stroke-width="1.1"><path d="M1476.4 469.8 h-3.5 v8.4 h3"/><path d="M1481.6 471.4 v2.4"/><path d="M1478.2 476.5 h3.8 M1480.1 474.6 v3.8" stroke-width="1"/></g><rect x="1476.3" y="469.2" width="3.2" height="2" fill="#222"/>
<g fill="none" stroke="#111" stroke-width="1.5"><rect x="1487.9" y="470.6" width="5.6" height="5.2"/><path d="M1490.4 470.6 v-2.4 h5.4 v5 h-2.2"/></g>
</svg>
<div class="t" style="left:1342px;top:467px;font-size:9.4px">Tool Options</div>
<div class="t small" style="left:1306px;top:486.5px">Arrange</div>
<div class="a btn" style="left:1307.0px;top:499.4px;width:22.7px;height:23.0px"></div>
<div class="a btn" style="left:1333.5px;top:499.4px;width:22.9px;height:23.0px"></div>
<div class="a btn" style="left:1360.2px;top:499.4px;width:23.0px;height:23.0px"></div>
<div class="a btn" style="left:1396.8px;top:499.4px;width:23.2px;height:23.0px"></div>
<div class="a btn" style="left:1423.5px;top:499.4px;width:23.1px;height:23.0px"></div>
<div class="a btn" style="left:1460.4px;top:499.4px;width:23.5px;height:23.0px"></div>
<div class="a btn" style="left:1307.0px;top:528.9px;width:22.7px;height:23.0px"></div>
<div class="a btn" style="left:1333.5px;top:528.9px;width:22.9px;height:23.0px"></div>
<div class="a btn" style="left:1360.2px;top:528.9px;width:23.0px;height:23.0px"></div>
<div class="a btn" style="left:1396.8px;top:528.9px;width:23.2px;height:23.0px"></div>
<div class="a btn" style="left:1423.5px;top:528.9px;width:23.1px;height:23.0px"></div>
<div class="a btn" style="left:1460.4px;top:528.9px;width:23.5px;height:23.0px"></div>
<div class="a" style="left:1389.5px;top:498px;width:1px;height:55px;background:#cfd1d3"></div>
<div class="a" style="left:1453px;top:498px;width:1px;height:55px;background:#cfd1d3"></div>
<svg class="a" style="left:1302px;top:495px" width="190" height="62" viewBox="1302 495 190 62"><g fill="none" stroke="#31363b" stroke-width="0.9"><path d="M1314.1 505.9 v9.3" stroke="#8a8c8e" stroke-width="1.8"/><rect x="1315.7" y="506.3" width="7.2" height="3.2"/><rect x="1315.7" y="512" width="3.2" height="3"/><ellipse cx="1345" cy="507.8" rx="2.3" ry="1.4"/><rect x="1341.3" y="512" width="7.4" height="2.8" fill="#d8d8d8"/><path d="M1375.8 505.9 v9.3" stroke="#8a8c8e" stroke-width="1.8"/><rect x="1367.4" y="506.3" width="7.2" height="3.2"/><rect x="1371.5" y="512" width="3.2" height="3"/><path d="M1405.3 515.2 v-8.5 M1403.8 508.3 l1.5 -1.8 l1.5 1.8 M1404 505.9 h8.8 M1408 509.3 h4.8 M1408 511.7 h4.8 M1408 514.1 h4.8" stroke-width="0.9"/><path d="M1432.4 515.2 v-7.8 M1430.9 509 l1.5 -1.8 l1.5 1.8 M1430.6 506.2 h9.3 M1435 509.3 h4.8 M1435 511.7 h4.8 M1435 514.1 h4.8" stroke-width="0.9"/><rect x="1467.4" y="506.3" width="9.2" height="8.6" stroke-width="1"/><path d="M1470.4 508.4 v1.4 M1473.8 508.4 v1.4 M1470.4 512 v1.4 M1473.8 512 v1.4" stroke-width="1.3"/><path d="M1313.9 535.9 h8.9" stroke="#8a8c8e" stroke-width="1.8"/><rect x="1314.3" y="537.9" width="3" height="3"/><rect x="1319.3" y="537.9" width="3.2" height="6.6"/><path d="M1340 540.2 h10" stroke-width="0.6"/><rect x="1341.1" y="536.2" width="2.4" height="8" fill="#eceded"/><rect x="1346.1" y="538.2" width="2.4" height="4" fill="#eceded"/><path d="M1367 544.2 h9" stroke="#8a8c8e" stroke-width="1.6"/><rect x="1367.3" y="539.7" width="3" height="3"/><rect x="1372.9" y="536.3" width="3" height="6.5"/><path d="M1405.3 536.1 v7.5 M1403.8 542 l1.5 1.8 l1.5 -1.8 M1404 544.5 h8.8 M1408 536.4 h4.8 M1408 538.8 h4.8 M1408 541.4 h4.8" stroke-width="0.9"/><path d="M1432.4 536.1 v6.8 M1430.9 541.3 l1.5 1.8 l1.5 -1.8 M1430.6 543.6 h9.3 M1435 536.4 h4.8 M1435 538.8 h4.8 M1435 541.4 h4.8" stroke-width="0.9"/><path d="M1467.4 538 v-1.8 h1.8 M1475 536.2 h1.8 v1.8 M1476.8 543 v1.8 h-1.8 M1469.2 544.8 h-1.8 v-1.8 M1470.4 538.4 v1.4 M1473.8 538.4 v1.4 M1470.4 542 v1.2 M1473.8 542 v1.2" stroke-width="1.1"/></g></svg>
<div class="a" style="left:1306px;top:560px;width:181px;height:1px;background:#d3d5d7"></div>
<div class="t small" style="left:1306px;top:565px">Geometry</div>
<svg class="a" style="left:1302px;top:576px" width="60" height="50" viewBox="1302 576 60 50">
<rect x="1313.5" y="585.5" width="31" height="31.5" fill="none" stroke="#000" stroke-width="2"/>
<circle cx="1313.4" cy="585.5" r="5.8" fill="none" stroke="#7d8083" stroke-width="0.8"/>
<circle cx="1345.1" cy="585.5" r="5.8" fill="none" stroke="#7d8083" stroke-width="0.8"/>
<circle cx="1313.4" cy="617" r="5.8" fill="none" stroke="#7d8083" stroke-width="0.8"/>
<circle cx="1345.1" cy="617" r="5.8" fill="none" stroke="#7d8083" stroke-width="0.8"/>
<circle cx="1329.2" cy="601.1" r="5.8" fill="none" stroke="#7d8083" stroke-width="0.8"/>
<circle cx="1313.4" cy="585.5" r="5.8" fill="none" stroke="#3daee9" stroke-width="0.8"/>
<circle cx="1313.4" cy="585.5" r="3.8" fill="#3daee9"/>
</svg>
<div class="t small" style="left:1357px;top:583.5px;font-weight:bold;color:#555a5f">X:</div>
<div class="t small" style="left:1357px;top:611px;font-weight:bold;color:#555a5f">Y:</div>
<div class="a inp" style="left:1370.5px;top:577px;width:72px;height:20.5px"></div>
<div class="a inp" style="left:1370.5px;top:605px;width:72px;height:20.5px"></div>
<div class="a" style="left:1449.5px;top:577px;width:37px;height:20.5px;border:1px solid #d0d2d4;border-right:none;border-radius:2px 0 0 2px;background:#eceded"></div>
<div class="a" style="left:1449.5px;top:605px;width:37px;height:20.5px;border:1px solid #d0d2d4;border-right:none;border-radius:2px 0 0 2px;background:#eceded"></div>
<div class="t small" style="left:1398px;top:583px;color:#a8aaac">0.00 in</div>
<div class="t small" style="left:1398px;top:611px;color:#a8aaac">0.00 in</div>
<div class="t small" style="left:1476px;top:583px;color:#a8aaac">0.0</div>
<div class="t small" style="left:1476px;top:611px;color:#a8aaac">0.0</div>
<svg class="a" style="left:1428px;top:577px" width="14" height="50" viewBox="1428 577 14 50">
<path d="M1431 584 L1434.3 580.8 L1437.6 584 M1431 590.5 L1434.3 593.7 L1437.6 590.5 M1431 612 L1434.3 608.8 L1437.6 612 M1431 618.5 L1434.3 621.7 L1437.6 618.5" fill="none" stroke="#a8aaac" stroke-width="1"/>
</svg>
<div class="a" style="left:1306px;top:633px;width:181px;height:1px;background:#d3d5d7"></div>
<div class="t small" style="left:1306px;top:638.5px">Line</div>
<div class="a btn" style="left:1306.5px;top:651px;width:37.5px;height:20.5px"></div>
<div class="a btn" style="left:1350.5px;top:651px;width:137px;height:20.5px;border-right:none;border-radius:2px 0 0 2px"></div>
<svg class="a" style="left:1306px;top:651px" width="182" height="22" viewBox="1306 651 182 22">
<path d="M1310 660.8 h19" stroke="#232629" stroke-width="1.3"/>
<path d="M1331.5 658.5 L1335 662 L1338.5 658.5" fill="none" stroke="#31363b" stroke-width="1"/>
<path d="M1353 660.8 h122" stroke="#232629" stroke-width="1.3"/>
<path d="M1477.5 658.5 L1481 662 L1484.5 658.5" fill="none" stroke="#31363b" stroke-width="1"/>
</svg>
<div class="a" style="left:1303px;top:678px;width:184px;height:13px;overflow:hidden">
 <div class="a" style="left:50px;top:1px;width:106px;height:20px;border:1px solid #c4c6c8;border-radius:2px;background:#fcfcfc"></div>
 <div class="a" style="left:162px;top:1px;width:30px;height:20px;border:1px solid #d0d2d4;border-radius:2px;background:#eceded"></div>
 <div class="t small" style="left:3px;top:9px;color:#31363b">Thickness:</div>
 <div class="t small" style="left:111.5px;top:9px;color:#31363b">0.01 in</div>
 <svg class="a" style="left:145px;top:3px" width="10" height="8"><path d="M1.5 5.5 L4.8 2.3 L8.1 5.5" fill="none" stroke="#31363b" stroke-width="1"/></svg>
</div>
<svg class="a" style="left:1302px;top:486px" width="202" height="220" viewBox="1302 486 202 220">
<path d="M1491.5 492 L1494.8 488.8 L1498.1 492" fill="none" stroke="#c6c8ca" stroke-width="1"/>
<rect x="1491" y="498" width="7.2" height="176" rx="3.6" fill="#b5b7ba"/>
<rect x="1491" y="498" width="7.2" height="102" rx="3.6" fill="#6c7075"/>
<path d="M1491.5 681.5 L1494.8 684.7 L1498.1 681.5" fill="none" stroke="#31363b" stroke-width="1"/>
<path d="M1312.5 694.5 L1309.5 698 L1312.5 701.5" fill="none" stroke="#c6c8ca" stroke-width="1"/>
<rect x="1318" y="694.2" width="152.7" height="8" rx="4" fill="#b5b7ba"/>
<rect x="1318" y="694.2" width="119" height="8" rx="4" fill="#6c7075"/>
<path d="M1478 694.5 L1481 698 L1478 701.5" fill="none" stroke="#31363b" stroke-width="1"/>
</svg>

<!-- Add shape docker -->
<div class="dock" style="top:710px;height:93px"></div>
<svg class="a" style="left:1302px;top:710px" width="202" height="20" viewBox="1302 710 202 20">
<path d="M1307 715 H1314 L1310.5 720.5 Z" fill="#232629"/>
<circle cx="1328.5" cy="717.6" r="5.9" fill="none" stroke="#232629" stroke-width="1.3"/><rect x="1326.2" y="718.5" width="4.8" height="2.9" fill="#232629"/><path d="M1326.4 716.0 v-0.3 a2 2 0 0 1 4 0 v3.2" fill="none" stroke="#232629" stroke-width="1.1"/>
<g fill="none" stroke="#111" stroke-width="1.5"><rect x="1469.4" y="716.4" width="5.6" height="5.2"/><path d="M1471.9 716.4 v-2.4 h5.4 v5 h-2.2"/></g>
<path d="M1488.5 714.6 L1495.1 720.8 M1495.1 714.6 L1488.5 720.8" stroke="#111" stroke-width="1.7"/>
</svg>
<div class="t" style="left:1341.8px;top:713px;font-size:9.4px">Add Shape</div>
<div class="a" style="left:1304.5px;top:729.5px;width:158px;height:35.5px;border:1px solid #d0d2d4;border-radius:2px;background:#fcfcfc;overflow:hidden"><div class="a" style="left:0.8px;top:0;width:31.4px;height:34px;overflow:hidden"><div class="t small" style="left:0;width:100%;text-align:center;top:26.5px">Ellipse</div></div><div class="a" style="left:32.2px;top:0;width:31.4px;height:34px;overflow:hidden"><div class="t small" style="left:0;width:100%;text-align:center;top:26.5px">Star</div></div><div class="a" style="left:63.6px;top:0;width:31.4px;height:34px;overflow:hidden"><div class="t small" style="left:2.6px;top:26.5px">Rectangle</div></div><div class="a" style="left:95.0px;top:0;width:31.4px;height:34px;overflow:hidden"><div class="t small" style="left:2.6px;top:26.5px">Artistic Text</div></div><div class="a" style="left:126.4px;top:0;width:31.4px;height:34px;overflow:hidden"><div class="t small" style="left:0;width:100%;text-align:center;top:26.5px">Image</div></div></div>
<svg class="a" style="left:1305px;top:730px" width="158" height="28" viewBox="1305 730 158 28">
<defs><linearGradient id="sg" x1="0" y1="0" x2="1" y2="1"><stop offset="0" stop-color="#e4e4e4"/><stop offset="1" stop-color="#cfcfcf"/></linearGradient></defs>
<path d="M1320.8 742.7 V731.4 A11.3 11.3 0 1 0 1332.1 742.7 Z" fill="url(#sg)" stroke="#c8c8c8" stroke-width="0.5"/>
<path d="M1351.5 731.9 L1354.4 738.4 L1361.8 739 L1356.2 743.8 L1357.8 752.4 L1351.5 748.4 L1345.2 752.4 L1346.8 743.8 L1341.2 739 L1348.6 738.4 Z" fill="url(#sg)" stroke="#c4c4c4" stroke-width="0.6" stroke-linejoin="round"/>
<rect x="1373" y="733" width="20.5" height="19.9" fill="url(#sg)" stroke="#cfcfcf" stroke-width="0.5"/>
<path d="M1405.9 734.1 h17.7 M1405.9 741.1 h17.7 M1405.9 748.1 h17.7" stroke="#31363b" stroke-width="0.9"/>
<path d="M1405.9 736.9 h9.7 M1405.9 743.3 h10.7 M1405.9 750.3 h14" stroke="#31363b" stroke-width="1"/>
<rect x="1421.8" y="750.6" width="1.6" height="1.4" fill="#31363b"/>
<rect x="1437.6" y="734.6" width="17" height="16.9" fill="none" stroke="#31363b" stroke-width="1"/>
<circle cx="1442" cy="738.9" r="1.8" fill="none" stroke="#31363b" stroke-width="0.9"/>
<path d="M1440.3 748.6 L1445.2 745.4 L1447.9 746.5 L1450 742.7 L1452.7 745.9" fill="none" stroke="#31363b" stroke-width="0.9"/>
</svg>
<div class="a btn" style="left:1465.5px;top:729.5px;width:35px;height:35.5px"></div>
<svg class="a" style="left:1466px;top:730px" width="35" height="35" viewBox="1466 730 35 35">
<circle cx="1477.5" cy="741.5" r="3.8" fill="#31363b"/><rect x="1481.5" y="737.5" width="8" height="8" fill="#31363b"/>
<rect x="1474.5" y="747.5" width="6" height="8" fill="#31363b"/><path d="M1481 755.5 L1485 748 L1489 755.5 Z" fill="#31363b"/>
</svg>

<!-- status bar -->
<div class="t" style="left:1076px;top:814px;font-size:9.5px">9.18, 7.51</div>
<div class="t" style="left:1182.5px;top:814px;font-size:9.5px">48%</div>
<svg class="a" style="left:1200px;top:806px" width="130" height="26" viewBox="1200 806 130 26">
<path d="M1205.5 816.5 L1209 820 L1212.5 816.5" fill="none" stroke="#31363b" stroke-width="1"/>
<rect x="1216.5" y="816.5" width="62.5" height="4.5" rx="2.25" fill="#bcbec0"/>
<rect x="1216.5" y="816.5" width="22" height="4.5" rx="2.25" fill="#3daee9"/>
<circle cx="1237.7" cy="818.6" r="6.6" fill="#f3f4f5" stroke="#9a9c9e" stroke-width="0.9"/>
<g fill="none" stroke="#31363b" stroke-width="1"><path d="M1287.5 816 v-1.5 h2 M1294.5 814.5 h2 v1.5 M1296.5 821.5 v1.5 h-2 M1289.5 823 h-2 v-1.5"/><circle cx="1292" cy="818.8" r="2.3"/></g>
<g fill="none" stroke="#31363b" stroke-width="1"><path d="M1309.5 816 v-1.5 h2 M1316.5 814.5 h2 v1.5 M1318.5 821.5 v1.5 h-2 M1311.5 823 h-2 v-1.5"/><circle cx="1314" cy="818.8" r="2.3"/></g>
</svg>
<div class="t" style="left:1329.5px;top:814px;font-size:9.5px">Stroke:</div>
<div class="t" style="left:1381.5px;top:814px;font-size:9.5px;color:#232629">None</div>
<div class="t" style="left:1426px;top:814px;font-size:9.5px">Fill:</div>
<div class="t" style="left:1463.5px;top:814px;font-size:9.5px;color:#232629">None</div>

<div class="a" id="botbar"></div>
</body></html>
